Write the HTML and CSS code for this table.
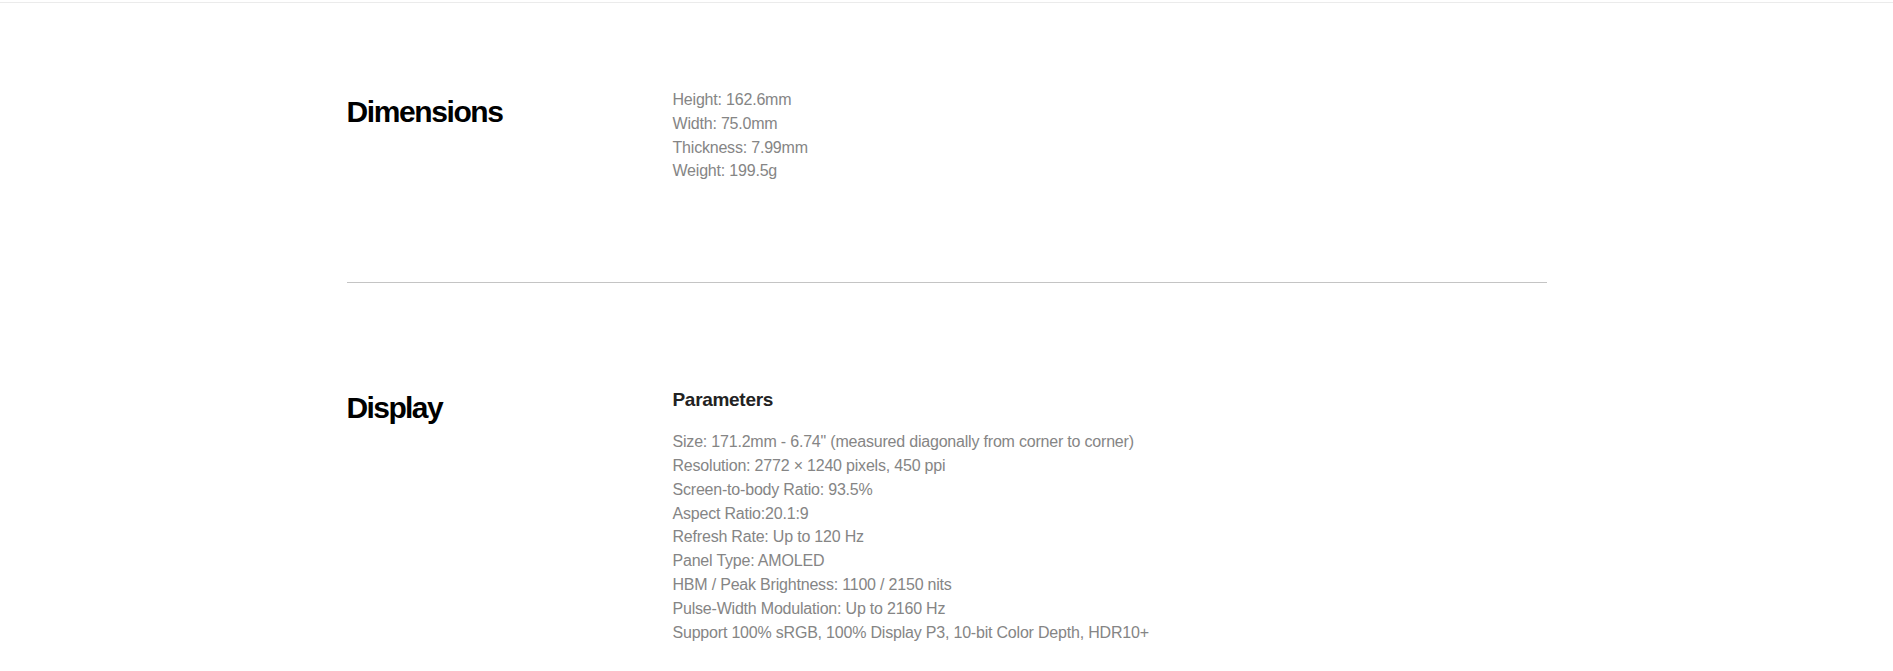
FILE: index.html
```html
<!DOCTYPE html>
<html lang="en">
<head>
<meta charset="utf-8">
<title>Specs</title>
<link rel="stylesheet" href="styles.css">
</head>
<body>
<div class="topbar"></div>
<main class="specs">
  <section class="spec spec-first">
    <h2 class="spec-title">Dimensions</h2>
    <div class="spec-body">
      <ul class="spec-list">
        <li>Height: 162.6mm</li>
        <li>Width: 75.0mm</li>
        <li>Thickness: 7.99mm</li>
        <li>Weight: 199.5g</li>
      </ul>
    </div>
  </section>
  <section class="spec spec-second">
    <h2 class="spec-title spec-title-alt">Display</h2>
    <div class="spec-body">
      <h3 class="spec-sub">Parameters</h3>
      <ul class="spec-list">
        <li>Size: 171.2mm - 6.74" (measured diagonally from corner to corner)</li>
        <li>Resolution: 2772 × 1240 pixels, 450 ppi</li>
        <li>Screen-to-body Ratio: 93.5%</li>
        <li>Aspect Ratio:20.1:9</li>
        <li>Refresh Rate: Up to 120 Hz</li>
        <li>Panel Type: AMOLED</li>
        <li>HBM / Peak Brightness: 1100 / 2150 nits</li>
        <li>Pulse-Width Modulation: Up to 2160 Hz</li>
        <li>Support 100% sRGB, 100% Display P3, 10-bit Color Depth, HDR10+</li>
      </ul>
    </div>
  </section>
</main>
</body>
</html>
```

FILE: styles.css
```css
html, body {
  margin: 0;
  padding: 0;
  background: #ffffff;
  font-family: "Liberation Sans", Arial, sans-serif;
}

.topbar {
  height: 2px;
  border-bottom: 1px solid #ebebeb;
}

.specs {
  width: 1200px;
  margin: 0 auto;
}

.spec {
  display: grid;
  grid-template-columns: 326px 1fr;
  align-items: start;
}

.spec-first {
  padding: 85px 0 99px;
  border-bottom: 1px solid #c4c4c4;
}

.spec-second {
  padding: 105px 0 40px;
}

.spec-title {
  margin: 6px 0 0;
  font-size: 30px;
  line-height: 36px;
  font-weight: 700;
  letter-spacing: -1.4px;
  color: #000000;
}

.spec-title-alt {
  margin-top: 2px;
  letter-spacing: -1.6px;
}

.spec-body {
  display: flex;
  flex-direction: column;
}

.spec-sub {
  margin: 0 0 18px;
  font-size: 19px;
  line-height: 24px;
  font-weight: 700;
  letter-spacing: -0.3px;
  color: #222222;
}

.spec-list {
  list-style: none;
  margin: 0;
  padding: 0;
  font-size: 16px;
  line-height: 23.8px;
  letter-spacing: -0.2px;
  color: #858585;
}
```
